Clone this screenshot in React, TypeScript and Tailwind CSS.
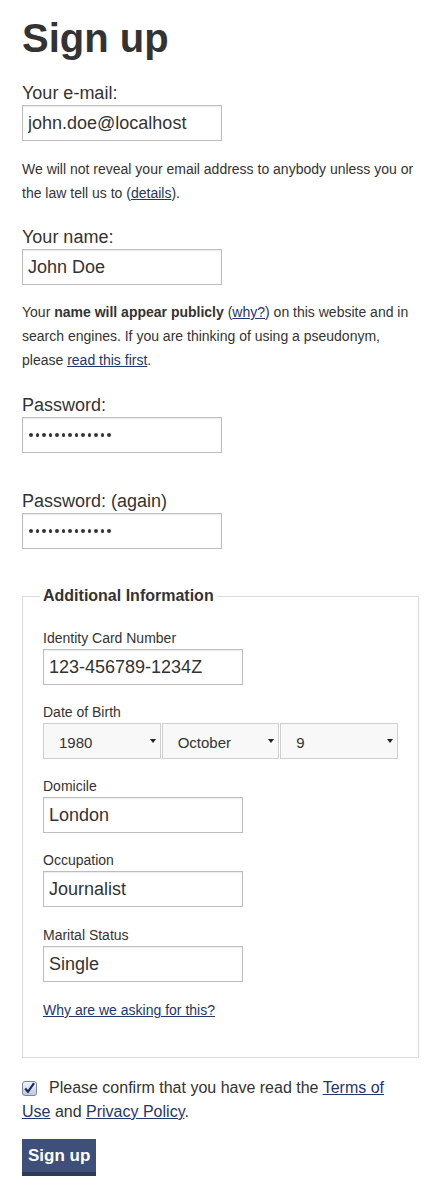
import React from 'react';

const inputCls =
  'block mt-[2px] w-[200px] h-[36px] border border-[#bdbdbd] bg-white px-[5px] text-[18px] text-[#333] shadow-[inset_0_1px_2px_rgba(0,0,0,0.08)] outline-none';

function Dots() {
  return (
    <div
      aria-label="password"
      className="mt-[2px] flex h-[36px] w-[200px] items-center gap-[3px] border border-[#bdbdbd] bg-white pl-[6px] shadow-[inset_0_1px_2px_rgba(0,0,0,0.08)]"
    >
      {Array.from({ length: 13 }).map((_, i) => (
        <span key={i} className="h-[3.5px] w-[3.5px] rounded-full bg-[#33343d]" />
      ))}
    </div>
  );
}

function Select({ value }: { value: string }) {
  return (
    <div className="relative">
      <select
        value={value}
        onChange={() => {}}
        className="block h-[36px] w-full appearance-none border border-[#cfcfcf] bg-[#f8f8f8] pl-[15px] pt-[5px] text-[15px] text-[#333] outline-none"
      >
        <option value={value}>{value}</option>
      </select>
      <svg className="pointer-events-none absolute right-[5px] top-[16px]" width="6" height="4" viewBox="0 0 6 4">
        <path d="M0 0h6L3 4z" fill="#222" />
      </svg>
    </div>
  );
}

const link = 'text-[#24366a] underline';

export default function App() {
  return (
    <div className="min-h-screen bg-white font-['Liberation_Sans',Arial,sans-serif] text-[#333]">
      <form className="ml-[22px] w-[397px] pt-[17px]" onSubmit={(e) => e.preventDefault()}>
        <h1 className="text-[40px] font-bold leading-[42px]">Sign up</h1>

        <label className="mt-[24px] block text-[18px] leading-[20px]">Your e-mail:</label>
        <input className={inputCls} readOnly value="john.doe@localhost" />
        <p className="mt-[16px] text-[14px] leading-[24px]">
          We will not reveal your email address to anybody unless you or the law tell us to (
          <a className={link} href="#">details</a>).
        </p>

        <label className="mt-[22px] block text-[18px] leading-[20px]">Your name:</label>
        <input className={inputCls} readOnly value="John Doe" />
        <p className="mt-[15px] text-[14px] leading-[24px]">
          Your <b>name will appear publicly</b> (<a className={link} href="#">why?</a>) on this website and in
          search engines. If you are thinking of using a pseudonym, please{' '}
          <a className={link} href="#">read this first</a>.
        </p>

        <label className="mt-[23px] block text-[18px] leading-[20px]">Password:</label>
        <Dots />

        <label className="mt-[38px] block text-[18px] leading-[20px]">Password: (again)</label>
        <Dots />

        <fieldset className="mt-[37px] border border-[#dcdcdc] pb-[38px] pl-[17px] pt-[23px]">
          <legend className="px-[3px] text-[16px] font-bold leading-[20px]">Additional Information</legend>
          <div className="pl-[3px]">
            <label className="block text-[14px] leading-[18px]">Identity Card Number</label>
            <input className={inputCls} readOnly value="123-456789-1234Z" />

            <label className="mt-[18px] block text-[14px] leading-[18px]">Date of Birth</label>
            <div className="mt-[2px] grid w-[355px] grid-cols-3 gap-px">
              <Select value="1980" />
              <Select value="October" />
              <Select value="9" />
            </div>

            <label className="mt-[18px] block text-[14px] leading-[18px]">Domicile</label>
            <input className={inputCls} readOnly value="London" />

            <label className="mt-[18px] block text-[14px] leading-[18px]">Occupation</label>
            <input className={inputCls} readOnly value="Journalist" />

            <label className="mt-[19px] block text-[14px] leading-[18px]">Marital Status</label>
            <input className={inputCls} readOnly value="Single" />

            <a className={`${link} mt-[19px] block w-fit text-[14px] leading-[18px]`} href="#">
              Why are we asking for this?
            </a>
          </div>
        </fieldset>

        <p className="mt-[18px] pr-[6px] text-[16px] leading-[24px]">
          <span className="mr-[12px] inline-flex h-[15px] w-[15px] items-center justify-center rounded-[3px] border border-[#7d8799] bg-gradient-to-b from-[#f2f6fb] to-[#b8cae5] align-[-2px]">
            <svg width="13" height="13" viewBox="0 0 13 13">
              <path d="M2.2 6.5l2.8 3.3L11 1.2" fill="none" stroke="#1c2b4f" strokeWidth="2.2" />
            </svg>
          </span>
          Please confirm that you have read the <a className={link} href="#">Terms of Use</a> and{' '}
          <a className={link} href="#">Privacy Policy</a>.
        </p>

        <button
          type="submit"
          className="mt-[15px] block h-[37px] border-b-[4px] border-[#2d3a58] bg-[#3e5079] px-[6px] text-[17px] font-bold leading-[20px] text-white"
        >
          Sign up
        </button>
      </form>
    </div>
  );
}
